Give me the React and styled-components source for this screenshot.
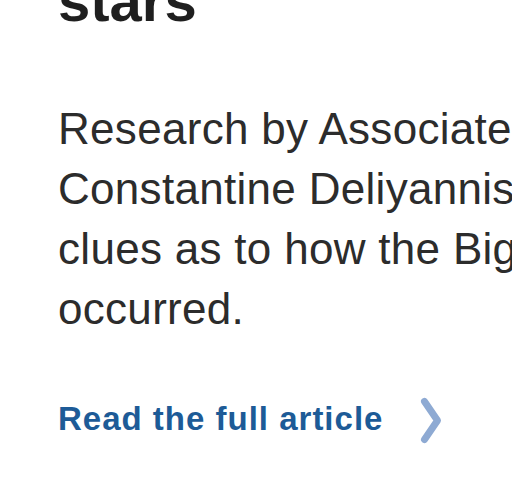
import React from 'react';
import styled, { createGlobalStyle } from 'styled-components';

const GlobalStyle = createGlobalStyle`
    html, body {
        margin: 0;
        padding: 0;
        background: #ffffff;
        overflow: hidden;
    }
    body {
        font-family: "Liberation Sans", Arial, Helvetica, sans-serif;
    }
`;

const Article = styled.article`
    width: 512px;
    height: 498px;
    overflow: hidden;
    padding-left: 58px;
    box-sizing: border-box;
`;

const Title = styled.h2`
    margin: -28px 0 0;
    font-size: 58px;
    line-height: 58px;
    font-weight: 700;
    color: #1f1f1f;
    white-space: nowrap;
`;

const Summary = styled.p`
    margin: 69px 0 0;
    font-size: 44px;
    line-height: 60px;
    letter-spacing: 0.3px;
    color: #2c2c2c;
    white-space: nowrap;
`;

const MoreRow = styled.a`
    display: flex;
    align-items: center;
    margin-top: 52px;
    text-decoration: none;
    cursor: pointer;
`;

const MoreText = styled.span`
    font-size: 33px;
    line-height: 40px;
    font-weight: 700;
    letter-spacing: 1px;
    color: #1d5b97;
    white-space: nowrap;
`;

const Chevron = styled.svg`
    flex: none;
    margin-left: 34px;
    margin-top: 4px;
`;

const App = () => {
    return (
        <>
            <GlobalStyle />
            <Article>
                <Title>stars</Title>
                <Summary>
                    Research by Associate Professor<br />
                    Constantine Deliyannis provides<br />
                    clues as to how the Big Bang<br />
                    occurred.
                </Summary>
                <MoreRow href="#">
                    <MoreText>Read the full article</MoreText>
                    <Chevron width="30" height="52" viewBox="0 0 30 52">
                        <path d="M7.5 6.5 L20.5 25.5 L7.5 44.5" fill="none" stroke="#8eaad3" strokeWidth="7" strokeLinecap="round" strokeLinejoin="round" />
                    </Chevron>
                </MoreRow>
            </Article>
        </>
    );
};

export default App;
